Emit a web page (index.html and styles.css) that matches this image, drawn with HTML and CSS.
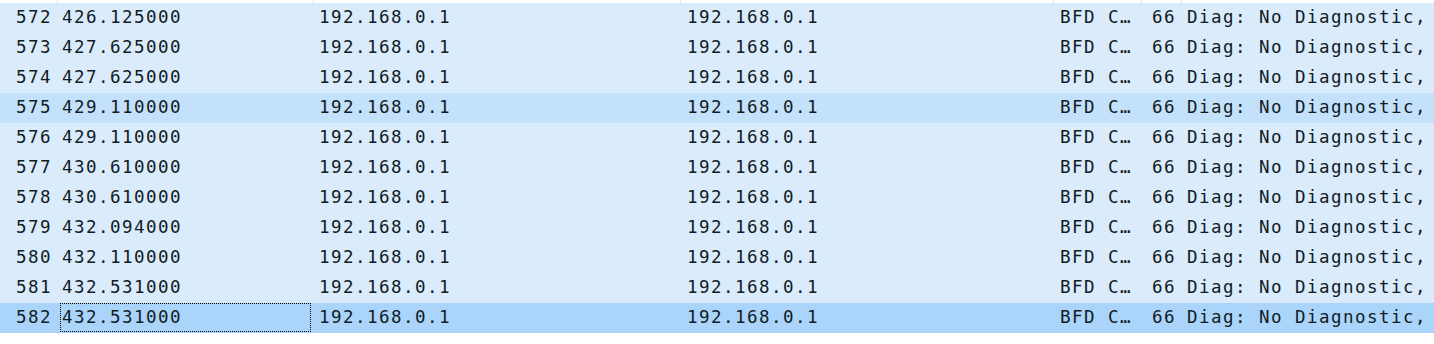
FILE: index.html
```html
<!DOCTYPE html>
<html>
<head>
<meta charset="utf-8">
<link rel="stylesheet" href="styles.css">
</head>
<body>
<div class="list">
  <div class="hdr">
    <div class="hc"></div><div class="hc"></div><div class="hc"></div><div class="hc"></div><div class="hc"></div><div class="hc"></div><div class="hc last"></div>
  </div>
  <div class="row"><div class="c no">572</div><div class="c t">426.125000</div><div class="c src">192.168.0.1</div><div class="c dst">192.168.0.1</div><div class="c pr">BFD C…</div><div class="c len">66</div><div class="c info">Diag: No Diagnostic,</div></div>
  <div class="row"><div class="c no">573</div><div class="c t">427.625000</div><div class="c src">192.168.0.1</div><div class="c dst">192.168.0.1</div><div class="c pr">BFD C…</div><div class="c len">66</div><div class="c info">Diag: No Diagnostic,</div></div>
  <div class="row"><div class="c no">574</div><div class="c t">427.625000</div><div class="c src">192.168.0.1</div><div class="c dst">192.168.0.1</div><div class="c pr">BFD C…</div><div class="c len">66</div><div class="c info">Diag: No Diagnostic,</div></div>
  <div class="row hl"><div class="c no">575</div><div class="c t">429.110000</div><div class="c src">192.168.0.1</div><div class="c dst">192.168.0.1</div><div class="c pr">BFD C…</div><div class="c len">66</div><div class="c info">Diag: No Diagnostic,</div></div>
  <div class="row"><div class="c no">576</div><div class="c t">429.110000</div><div class="c src">192.168.0.1</div><div class="c dst">192.168.0.1</div><div class="c pr">BFD C…</div><div class="c len">66</div><div class="c info">Diag: No Diagnostic,</div></div>
  <div class="row"><div class="c no">577</div><div class="c t">430.610000</div><div class="c src">192.168.0.1</div><div class="c dst">192.168.0.1</div><div class="c pr">BFD C…</div><div class="c len">66</div><div class="c info">Diag: No Diagnostic,</div></div>
  <div class="row"><div class="c no">578</div><div class="c t">430.610000</div><div class="c src">192.168.0.1</div><div class="c dst">192.168.0.1</div><div class="c pr">BFD C…</div><div class="c len">66</div><div class="c info">Diag: No Diagnostic,</div></div>
  <div class="row"><div class="c no">579</div><div class="c t">432.094000</div><div class="c src">192.168.0.1</div><div class="c dst">192.168.0.1</div><div class="c pr">BFD C…</div><div class="c len">66</div><div class="c info">Diag: No Diagnostic,</div></div>
  <div class="row"><div class="c no">580</div><div class="c t">432.110000</div><div class="c src">192.168.0.1</div><div class="c dst">192.168.0.1</div><div class="c pr">BFD C…</div><div class="c len">66</div><div class="c info">Diag: No Diagnostic,</div></div>
  <div class="row"><div class="c no">581</div><div class="c t">432.531000</div><div class="c src">192.168.0.1</div><div class="c dst">192.168.0.1</div><div class="c pr">BFD C…</div><div class="c len">66</div><div class="c info">Diag: No Diagnostic,</div></div>
  <div class="row sel"><div class="c no">582</div><div class="c t focus">432.531000</div><div class="c src">192.168.0.1</div><div class="c dst">192.168.0.1</div><div class="c pr">BFD C…</div><div class="c len">66</div><div class="c info">Diag: No Diagnostic,</div></div>
</div>
</body>
</html>
```
FILE: styles.css
```css
html, body {
  margin: 0;
  padding: 0;
  background: #ffffff;
}
.list {
  width: 1434px;
  overflow: hidden;
  font-family: "DejaVu Sans Mono", monospace;
  font-size: 17.5px;
  letter-spacing: 1.46px;
  color: #111c24;
}
.hdr, .row {
  display: grid;
  grid-template-columns: 58px 256px 367px 373px 88px 40px 1fr;
}
.hdr {
  height: 3px;
  background: #ffffff;
}
.hc {
  border-right: 1px solid #e3e3e3;
}
.hc.last {
  border-right: none;
}
.row {
  height: 30px;
  background: #daebfc;
}
.row.hl {
  background: #c4e1fc;
}
.row.sel {
  background: #abd4fb;
}
.c {
  display: flex;
  align-items: center;
  white-space: nowrap;
  overflow: hidden;
  padding-left: 5px;
  padding-bottom: 3px;
  box-sizing: border-box;
}
.c.no {
  justify-content: flex-end;
  padding-left: 0;
  padding-right: 6px;
}
.c.t {
  padding-left: 4px;
}
.c.dst {
  padding-left: 6px;
}
.c.pr {
  padding-left: 6px;
}
.c.len {
  justify-content: flex-end;
  padding-left: 0;
  padding-right: 6px;
}
.c.info {
  padding-left: 5px;
}
.c.focus {
  border: 1px dotted #000000;
  margin: 0 3px 1px 2px;
  padding-left: 1px;
  padding-bottom: 1px;
}
```
